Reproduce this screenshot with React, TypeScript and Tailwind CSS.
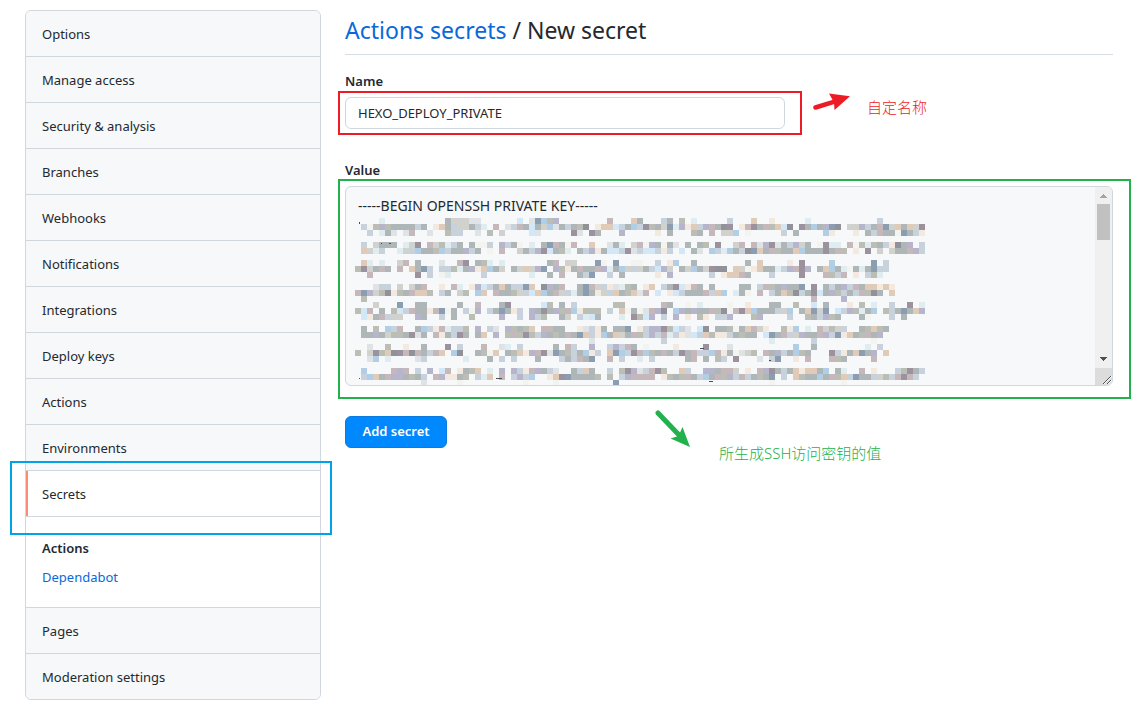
import React from "react";

const topItems = [
  "Options",
  "Manage access",
  "Security & analysis",
  "Branches",
  "Webhooks",
  "Notifications",
  "Integrations",
  "Deploy keys",
  "Actions",
  "Environments",
];

const bottomItems = ["Pages", "Moderation settings"];

const palette: Record<string, string> = {
  "1": "#dde1e3",
  "2": "#cdcdca",
  "3": "#a8afb0",
  "4": "#86868f",
  b: "#cfe6f8",
  B: "#a9cae4",
  n: "#8094a9",
  p: "#b1aec8",
  k: "#c0b0b4",
  t: "#dec7b2",
  y: "#f3e8dc",
  g: "#b4b8ae",
  e: "#ddecef",
  w: "#f3f3ee",
  m: "#938895",
  c: "#c2ceda",
};

// Each entry is [row, left third, middle third, right third] of the redacted key.
const mosaicRows: [number, string, string, string][] = [
  [0, "....e..........322211......b.1", "nBgp........k...t3...c3.g.e....", ".c...t..y.....e...........c......."],
  [1, ".cwgpg3333c3.yt3c223ce.k.1ck3b", "32B13c3g4.yttbc3Bcmg32nepytcpk3", "4m.ykm3kgtb4.m3B3pn4.22pc3kn2t3t2m"],
  [2, "..c.e31.1k..1..gcc..1.g.2....b", "1.....m1.m3...p.....y.3...g3.k.", "22B.w.....c.3....By...y.3ck33wn3cy"],
  [4, ".c.2333.e2m.k2gec3.3wwc.pc3w.e", ".3nk3wk..t..13e.2kwp3w31.3.3g.m", "..2k.k1pm13cp23.wmee.kwgeg3cy43p.c"],
  [5, ".t2ec..e2cB33gBc33pc3.w.k..23c", "pmb3ge.3cpy3bbcm1cbbcyc.b.31.Bc", "eB3c4nt3kg33tB333m3kg.y.m.2.233kpc"],
  [7, ".te.e..2k.3...1..km.3ge.e.....", "..3k.22...nw.n..ww..c.yB..3....", "....3.t....y.m....B......n.c......"],
  [8, "gm23k3.k.t3nc.ccge3pytB32.32t2", "pn.pgy3k33kpe3B2c23cbp2.32B32m4", "4.t2wyt33ecpkmp.3tB3ew3e3ncc......"],
  [9, "..k.......m.c.we.....c.......e", "..3.k..3cn..c.3.....y.p......c.", "yttk3...c....m...kgck.y.cge......."],
  [11, "...1cc.2.23k..y.ke.ypbc3t3ccnt", ".4p3k..3nk2cy1eg3.yt.c3mbyk3.3.", "...33.ckg3p33n.m.3c3pck3ttyty....."],
  [12, "knp2g4yg3kttg.c3.2g.Bt.k33g2cb", "tB3k2ce3n3y2ct3gt1k.b.ybc333kct", "B.e3w.k.c3tg4c3mb3pgc3ckg43.t....."],
  [13, ".g", "", "...............k....p"],
  [14, "...2...n..33.....3..k...3m....", ".bg.3.c......gg......k3..w.e...", ".w..y...33..g..b.3...y.g.e..c..m.e"],
  [15, "gbk.3.gbck33yknw3.cwp.c3n3yc.p", "3m3pgkByggg.c.tw3w1kp4.Bp3p33kg", "4wkmtB333c2B.3tn2n.bcpge3B.gc3n3tp"],
  [16, ".by3kc22..p3..c.3..g....p..c.p", "cg..32.ceb3...e.mgbp.c.p.y.gy.c", "cp...gp....c..g3cpg3...3w...c.3..."],
  [18, ".3.g.Bck..3Bcykeccg.p.c1.pg3gt", ".kk33..y1cy3.33n.ycppmgbc1.b4.3", "3gw3tk2y..gyB.e.k2g2c..3gtg3"],
  [19, ".33p32gg3m13.ky3cm3.3t.p.gkgmg", "cp3g3k3ntcyB3t23kgcpckecy1bctgy", "yc3g33.bn3kc2p33kpcnyt3gk3p"],
  [20, "", ".........1...........c", "........e......c.........w"],
  [21, "..1..g..y..3...m.c...k..1e.c..", "...3.kc..p..cpck3.w....y....m..", ".1..........B..3........e.c......."],
  [22, "g.2mgt4mk4k3ckt.B4..3gwt.3gtyp", "km1n3gc3Byc.tnBcmkBg3k3cm3kccBk", "y3w12g.k3pc3Bg3...mcy3tn3p.t"],
  [23, "..1B.e....1c......e...3.c.c...", "3...c3ck3n..k.c..e.c.....3k.3.g", "c.m...1.cn..y.k...kg3....k"],
  [25, ".B....kpk.c.p.bk.y3gt.e.p.pcyk", "p3c1..3ct3..c.gmp1ckmg..tc..pp3", "kk2.y.kpm3c3tytt3B.3e..k.y...cgm3c"],
  [26, ".cBt3kpp3g3c.kpyy3g.cet.k.cpcB", "..ytmn3333g.g.cpkkkk.yg3gk3cB3k", "gpckc3g3n.c.tg33B3kgtcn33c2gckmkc"],
  [27, "...........1.....w..........w", "...w.........n", "........w...........w"],
];

function Mosaic() {
  return (
    <svg
      aria-hidden="true"
      className="pointer-events-none absolute left-[9px] top-[31px]"
      width="570"
      height="167"
      viewBox="0 0 570 167"
      shapeRendering="crispEdges"
    >
      <g opacity="0.9">
        {mosaicRows.flatMap(([row, a, b, c]) =>
          (a.padEnd(30, ".") + b.padEnd(31, ".") + c)
            .split("")
            .map((ch, col) =>
              palette[ch] ? (
                <rect key={`${row}-${col}`} x={col * 6} y={row * 6} width="6" height="6" fill={palette[ch]} />
              ) : null,
            ),
        )}
      </g>
      <path
        d="M4 4h1v2h-1zM26 25h1v1h-1zM34 25h2v1h-2zM345 130h4v1h-4zM414 142h2v1h-2zM4 160h1v1h-1zM141 160h6v1h-6zM354 163h4v1h-4z"
        fill="#4b4f57"
      />
    </svg>
  );
}

function NavItem({ label, edge = "" }: { label: string; edge?: string }) {
  return (
    <li className={`border-b border-[#d0d7de] bg-[#f6f8fa] ${edge}`}>
      <a href="#" className="block px-4 pb-[11px] pt-[13px] leading-[21px]">
        {label}
      </a>
    </li>
  );
}

function Sidebar() {
  return (
    <nav aria-label="Repository settings" className="w-74 shrink-0 self-start rounded-md border border-[#d0d7de] bg-white">
      <ul>
        {topItems.map((label, i) => (
          <NavItem key={label} label={label} edge={i === 0 ? "rounded-t-md" : ""} />
        ))}
        <li className="relative border-b border-[#d0d7de]">
          <a
            href="#"
            aria-current="page"
            className="block border-l-2 border-[#fd8c73] pb-[11px] pl-3.5 pr-4 pt-[13px] leading-[21px]"
          >
            Secrets
          </a>
          <span className="pointer-events-none absolute -bottom-[19px] -left-4 -right-3 -top-2.5 border-2 border-[#00a2e8]" />
        </li>
        <li className="border-b border-[#d0d7de] px-4 pb-[15px] pt-[17px]">
          <a href="#" className="block font-semibold leading-[29px]">
            Actions
          </a>
          <a href="#" className="block leading-[29px] text-[#0969da]">
            Dependabot
          </a>
        </li>
        {bottomItems.map((label, i) => (
          <NavItem key={label} label={label} edge={i === bottomItems.length - 1 ? "rounded-b-md border-b-0" : ""} />
        ))}
      </ul>
    </nav>
  );
}

function Scrollbar() {
  return (
    <div aria-hidden="true" className="flex w-[17px] shrink-0 flex-col items-center overflow-hidden rounded-r-[5px] bg-[#f0f0f0]">
      <svg width="17" height="17" viewBox="0 0 17 17" shapeRendering="crispEdges">
        <path d="M8 7h1v1h1v1h1v1h1v1H5v-1h1V9h1V8h1z" fill="#a3a3a3" />
      </svg>
      <div className="h-9 w-[13px] bg-[#c1c1c1]" />
      <div className="flex-1" />
      <svg width="17" height="17" viewBox="0 0 17 17" shapeRendering="crispEdges">
        <path d="M5 6h7v1h-1v1h-1v1H9v1H8V9H7V8H6V7H5z" fill="#505050" />
      </svg>
      <svg width="17" height="17" viewBox="0 0 17 17">
        <path d="M0 0h17v17H0z" fill="#dcdcdc" />
        <path d="M8 16l8-8M12 16l4-4" stroke="#505050" strokeWidth="1" />
        <path d="M9 16l8-8M13 16l4-4" stroke="#fff" strokeWidth="1" />
      </svg>
    </div>
  );
}

export default function App() {
  return (
    <div className="flex gap-6 bg-white pb-6 pl-[25px] pr-6 pt-2.5 font-['Noto_Sans','Noto_Sans_CJK_SC',sans-serif] text-[13px] text-[#24292f]">
      <Sidebar />
      <main className="min-w-0 flex-1">
        <h1 className="border-b border-[#d8dee4] pb-1.5 pt-0.5 text-[23px] leading-9">
          <a href="#" className="text-[#0969da]">
            Actions secrets
          </a>{" "}
          / New secret
        </h1>

        <form onSubmit={(e) => e.preventDefault()}>
          <label htmlFor="secret-name" className="mb-1.5 mt-4 block font-semibold leading-5">
            Name
          </label>
          <div className="flex items-start">
            <div className="relative w-110">
              <input
                id="secret-name"
                type="text"
                defaultValue="HEXO_DEPLOY_PRIVATE"
                className="block h-8 w-full rounded-md border border-[#d0d7de] bg-white px-3 outline-none"
              />
              <span className="pointer-events-none absolute -bottom-1.5 -left-[7px] -right-[17px] -top-1.5 border-2 border-[#ed1c24]" />
            </div>
            <svg aria-hidden="true" className="-mt-1 ml-7 shrink-0" width="38" height="18" viewBox="0 0 38 18">
              <path d="M2.500 14.500L24 7.800" stroke="#ed1c24" strokeWidth="4.500" strokeLinecap="round" />
              <path d="M16 .500L37 3.200L21.500 17L21 9.500z" fill="#ed1c24" />
            </svg>
            <span className="ml-4 text-[15px] font-light leading-5 text-[#ed1c24]">自定名称</span>
          </div>

          <label htmlFor="secret-value" className="mb-1.5 mt-[31px] block font-semibold leading-5">
            Value
          </label>
          <div className="relative">
            <div className="relative flex h-50 rounded-md border border-[#d0d7de] bg-[#f6f8fa]">
              <textarea
                id="secret-value"
                defaultValue="-----BEGIN OPENSSH PRIVATE KEY-----"
                className="min-w-0 flex-1 resize-none overflow-hidden bg-transparent px-3 py-[9px] text-sm leading-5 outline-none"
              />
              <Mosaic />
              <Scrollbar />
            </div>
            <span className="pointer-events-none absolute -bottom-[13px] -left-[7px] -right-[18px] -top-[7px] border-2 border-[#22b14c]" />
          </div>

          <div className="mt-[30px] flex items-start">
            <button type="submit" className="h-8 w-[102px] rounded-md border border-[#0b7be0] bg-[#0088ff] font-semibold text-white">
              Add secret
            </button>
            <svg aria-hidden="true" className="-mt-1.5 ml-52 shrink-0" width="36" height="38" viewBox="0 0 36 38">
              <path d="M3 3L24 25" stroke="#22b14c" strokeWidth="5" strokeLinecap="round" />
              <path d="M35 37L15.500 28.500L23.500 26L27.500 17z" fill="#22b14c" />
            </svg>
            <span className="ml-7 mt-[27px] text-[15px] font-light leading-5 text-[#22b14c]">所生成SSH访问密钥的值</span>
          </div>
        </form>
      </main>
    </div>
  );
}
